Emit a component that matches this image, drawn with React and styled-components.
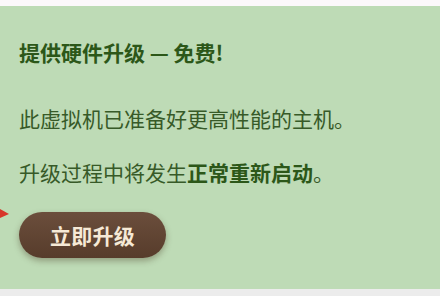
import React from "react";
import styled, { createGlobalStyle } from "styled-components";

const GlobalStyle = createGlobalStyle`
  html, body {
    margin: 0;
    padding: 0;
    background: #ececec;
  }
  body {
    font-family: "Noto Sans CJK SC", "Noto Sans", sans-serif;
  }
`;

const Page = styled.div`
  width: 440px;
  height: 296px;
  display: flex;
  flex-direction: column;
  overflow: hidden;
  position: relative;
`;

const TopStrip = styled.div`
  height: 6px;
  background: #fcf8fb;
`;

const Panel = styled.section`
  background: #bedbb6;
  padding: 32px 20px 31px 19px;
  display: flex;
  flex-direction: column;
  align-items: flex-start;
`;

const Title = styled.h2`
  margin: 0;
  font-size: 21px;
  line-height: 28px;
  font-weight: 700;
  color: #2c5719;
`;

const Text = styled.p`
  margin: ${(p) => p.$gap}px 0 0;
  font-size: 21px;
  line-height: 28px;
  color: #375a28;
`;

const Strong = styled.strong`
  font-weight: 700;
  color: #2c5719;
`;

const UpgradeButton = styled.button`
  margin-top: 26px;
  width: 147px;
  height: 46px;
  border: 0;
  border-radius: 23px;
  background: linear-gradient(#6b4e3c, #573c2b);
  color: #f6e9d6;
  font-family: inherit;
  font-size: 21px;
  font-weight: 700;
  letter-spacing: 0.3px;
  box-shadow: 0 3px 6px rgba(60, 40, 20, 0.35);
  cursor: pointer;
`;

const Arrow = styled.svg`
  position: absolute;
  left: 0;
  top: 208px;
`;

const BottomStrip = styled.div`
  flex: 1;
  background: #ececec;
`;

export default function App() {
  return (
    <>
      <GlobalStyle />
      <Page>
        <TopStrip />
        <Panel>
          <Title>提供硬件升级 — 免费!</Title>
          <Text $gap={38}>此虚拟机已准备好更高性能的主机。</Text>
          <Text $gap={26}>
            升级过程中将发生<Strong>正常重新启动</Strong>。
          </Text>
          <UpgradeButton>立即升级</UpgradeButton>
        </Panel>
        <BottomStrip />
        <Arrow width="10" height="12" viewBox="0 0 10 12">
          <polygon points="0,1 9,6 0,10" fill="#d8352a" />
        </Arrow>
      </Page>
    </>
  );
}
